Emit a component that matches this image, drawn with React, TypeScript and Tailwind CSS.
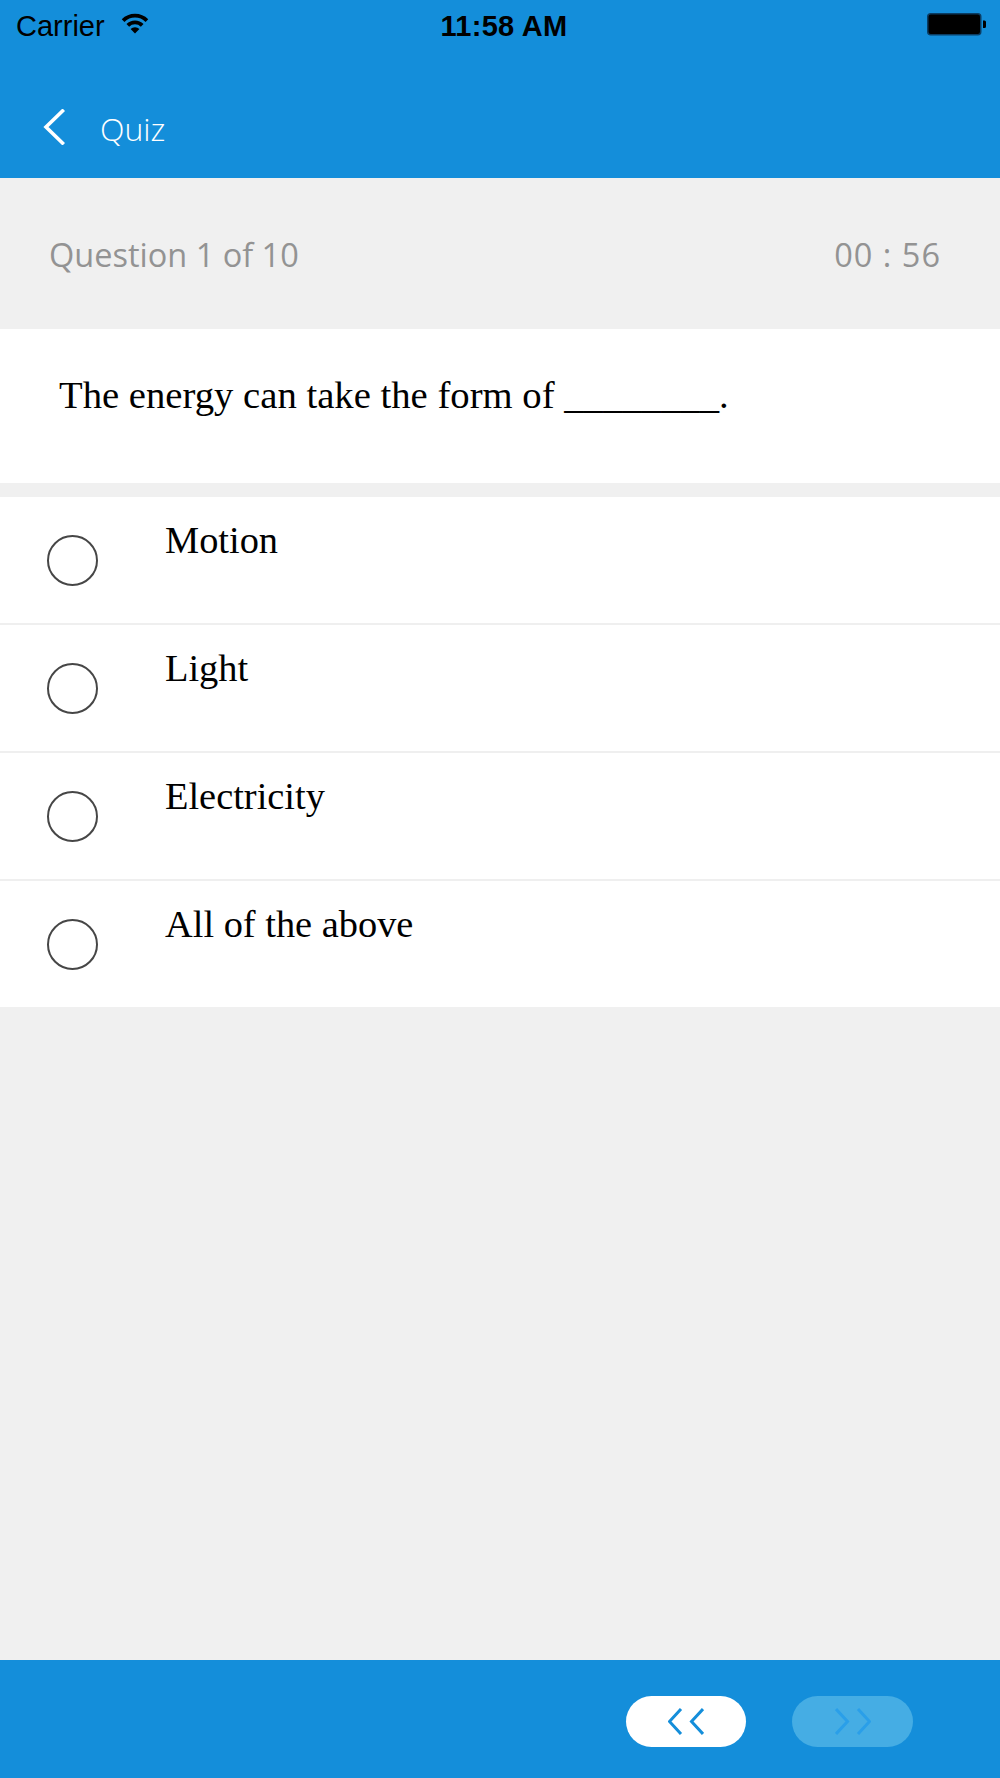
const options = ['Motion', 'Light', 'Electricity', 'All of the above'];

const WifiIcon = () => (
  <svg width="30" height="21" viewBox="0 0 30 21" fill="none">
    <path d="M3.1 7.6 A16.8 16.8 0 0 1 26.9 7.6" stroke="black" strokeWidth="3.8" />
    <path d="M7.8 12.3 A10.2 10.2 0 0 1 22.2 12.3" stroke="black" strokeWidth="3.8" />
    <path d="M15 20.5 L10.6 16 A6.2 6.2 0 0 1 19.4 16 Z" fill="black" />
  </svg>
);

const BatteryIcon = () => (
  <svg width="60" height="23" viewBox="0 0 60 23">
    <rect x="0.75" y="0.75" width="53" height="21" rx="3" fill="black" stroke="#0b3d63" strokeWidth="1.5" />
    <path d="M56 7.5 h1.5 a1.5 1.5 0 0 1 1.5 1.5 v4.5 a1.5 1.5 0 0 1 -1.5 1.5 h-1.5 Z" fill="black" />
  </svg>
);

const BackChevron = () => (
  <svg width="22" height="36" viewBox="0 0 22 36" fill="none">
    <polyline points="19.5,2 3,18 19.5,34" stroke="white" strokeWidth="3.6" strokeLinecap="square" />
  </svg>
);

const DoubleChevron = ({ dir, color }: { dir: 'left' | 'right'; color: string }) => (
  <svg width="36" height="27" viewBox="0 0 36 27" fill="none">
    {dir === 'left' ? (
      <>
        <polyline points="13,1 1.5,13.5 13,26" stroke={color} strokeWidth="3" />
        <polyline points="35,1 23.5,13.5 35,26" stroke={color} strokeWidth="3" />
      </>
    ) : (
      <>
        <polyline points="1,1 12.5,13.5 1,26" stroke={color} strokeWidth="3" />
        <polyline points="23,1 34.5,13.5 23,26" stroke={color} strokeWidth="3" />
      </>
    )}
  </svg>
);

export default function App() {
  return (
    <div className="w-[1000px] h-[1778px] flex flex-col bg-[#f0f0f0] overflow-hidden">
      {/* Header */}
      <header className="h-[178px] bg-[#148eda] flex flex-col">
        <div className="h-[53px] grid grid-cols-3 pt-[9px] px-[16px] font-['Liberation_Sans',Arial,sans-serif] text-[29px] leading-[34px] text-black">
          <div className="flex items-start gap-[15px]">
            <span>Carrier</span>
            <span className="pt-[4px]">
              <WifiIcon />
            </span>
          </div>
          <div className="text-center font-semibold pl-[8px] tracking-[0.3px]">11:58 AM</div>
          <div className="flex justify-end pt-[4px] mr-[-3px]">
            <BatteryIcon />
          </div>
        </div>
        <div className="h-[125px] flex items-center pl-[43px] pt-[22px]">
          <BackChevron />
          <span className="ml-[35px] pt-[4px] text-white text-[32px] font-light font-['Open_Sans',sans-serif]">
            Quiz
          </span>
        </div>
      </header>

      {/* Progress */}
      <div className="h-[151px] flex items-center justify-between pl-[49px] pr-[59px] pt-[3px] font-['Open_Sans',sans-serif] font-normal text-[32.5px] leading-[40px] text-[#939393]">
        <span>Question 1 of 10</span>
        <span className="tracking-[1px]">00 : 56</span>
      </div>

      {/* Question */}
      <div className="h-[154px] bg-white pl-[59px] pt-[44px] font-['Liberation_Serif','Times_New_Roman',serif] text-[38.7px] leading-[44px] text-black">
        The energy can take the form of ________.
      </div>

      <div className="h-[14px]" />

      {/* Options */}
      <div className="flex flex-col gap-[2px] bg-[#efefef]">
        {options.map((opt) => (
          <div key={opt} className="h-[126px] bg-white flex pl-[47px]">
            <div className="self-center w-[51px] h-[51px] rounded-full border-[2px] border-[#464646]" />
            <div className="ml-[67px] pt-[21px] font-['Liberation_Serif','Times_New_Roman',serif] text-[38.4px] leading-[44px] text-black">
              {opt}
            </div>
          </div>
        ))}
      </div>

      <div className="flex-1" />

      {/* Bottom bar */}
      <div className="h-[118px] bg-[#148eda] flex items-start justify-end pt-[36px] pr-[87px] gap-[46px]">
        <button className="w-[120px] h-[51px] rounded-full bg-white flex items-center justify-center">
          <DoubleChevron dir="left" color="#148eda" />
        </button>
        <button className="w-[121px] h-[51px] rounded-full bg-[#45ade4] flex items-center justify-center">
          <DoubleChevron dir="right" color="#2a9fe9" />
        </button>
      </div>
    </div>
  );
}
